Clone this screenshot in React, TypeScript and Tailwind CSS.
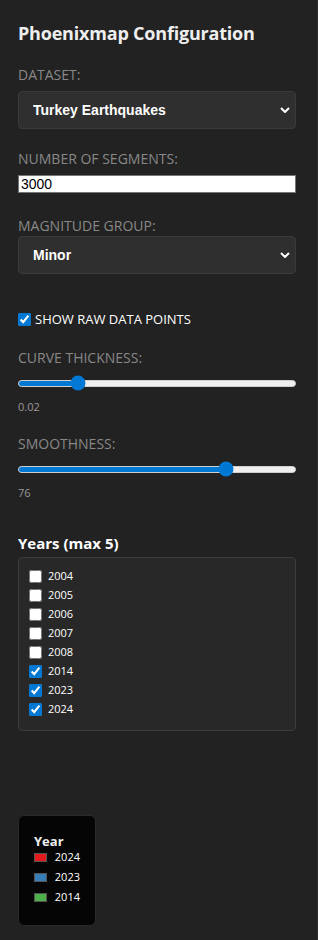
import { useState } from 'react'

const years = [
  { year: 2004, checked: false },
  { year: 2005, checked: false },
  { year: 2006, checked: false },
  { year: 2007, checked: false },
  { year: 2008, checked: false },
  { year: 2014, checked: true },
  { year: 2023, checked: true },
  { year: 2024, checked: true },
]

const legend = [
  { year: 2024, color: 'bg-[#e41a1c]' },
  { year: 2023, color: 'bg-[#377eb8]' },
  { year: 2014, color: 'bg-[#4daf4a]' },
]

function Chevron() {
  return (
    <svg
      viewBox="0 0 10 6"
      className="pointer-events-none absolute top-1/2 right-[6px] h-[6px] w-[10px] -translate-y-1/2"
    >
      <polyline points="1,1 5,5 9,1" fill="none" stroke="#fff" strokeWidth="2" />
    </svg>
  )
}

function Select({ value, options }: { value: string; options: string[] }) {
  return (
    <div className="relative">
      <select
        defaultValue={value}
        className="h-[38px] w-full appearance-none rounded-[4px] border border-[#3a3a3a] bg-[#2f2f2f] pl-[14px] text-[14px] font-bold text-white outline-none [font-family:'Liberation_Sans',Arial,sans-serif]"
      >
        {options.map((o) => (
          <option key={o}>{o}</option>
        ))}
      </select>
      <Chevron />
    </div>
  )
}

function Slider({ percent }: { percent: number }) {
  return (
    <div className="relative flex h-[16px] items-center">
      <div className="h-[7px] w-full overflow-hidden rounded-full border border-[#cfcfcf] bg-[#efefef]">
        <div className="h-full bg-[#0078d4]" style={{ width: `${percent}%` }} />
      </div>
      <div
        className="absolute top-1/2 h-[15px] w-[15px] -translate-x-1/2 -translate-y-1/2 rounded-full bg-[#0078d4]"
        style={{ left: `calc(7px + (100% - 14px) * ${percent / 100})` }}
      />
    </div>
  )
}

function Label({ children, className }: { children: string; className: string }) {
  return (
    <div className={`text-[14px] leading-[20px] text-[#888] uppercase ${className}`}>
      {children}
    </div>
  )
}

export default function App() {
  const [showRaw, setShowRaw] = useState(true)

  return (
    <div className="min-h-[940px] w-[318px] border-r border-[#2c2c2c] bg-[#222222] pt-[20px] pr-[21px] pl-[18px] text-white [font-family:'Open_Sans','Noto_Sans',sans-serif]">
      <h3 className="text-[18px] leading-[26px] font-bold tracking-[-0.2px] text-[#eee]">
        Phoenixmap Configuration
      </h3>

      <Label className="mt-[19px]">Dataset:</Label>
      <div className="mt-[6px]">
        <Select value="Turkey Earthquakes" options={['Turkey Earthquakes']} />
      </div>

      <Label className="mt-[20px]">Number of segments:</Label>
      <input
        type="text"
        defaultValue="3000"
        className="mt-[6px] block h-[18px] w-full border border-[#767676] bg-white px-[2px] text-[14px] leading-[16px] text-black outline-none [font-family:'Liberation_Sans',Arial,sans-serif]"
      />

      <Label className="mt-[23px]">Magnitude group:</Label>
      <div className="mt-[0px]">
        <Select value="Minor" options={['Minor']} />
      </div>

      <label className="mt-[36px] flex items-center gap-[4px] text-[13px] leading-[18px] text-white">
        <input
          type="checkbox"
          checked={showRaw}
          onChange={(e) => setShowRaw(e.target.checked)}
          className="m-0 h-[13px] w-[13px] accent-[#0078d4]"
        />
        SHOW RAW DATA POINTS
      </label>

      <Label className="mt-[20px]">Curve thickness:</Label>
      <div className="mt-[7px]">
        <Slider percent={20} />
      </div>
      <div className="mt-[8px] text-[11px] leading-[16px] text-[#999]">0.02</div>

      <Label className="mt-[19px]">Smoothness:</Label>
      <div className="mt-[7px]">
        <Slider percent={76} />
      </div>
      <div className="mt-[8px] text-[11px] leading-[16px] text-[#999]">76</div>

      <h4 className="mt-[31px] text-[15px] leading-[22px] font-bold text-white">Years (max 5)</h4>
      <div className="mt-[3px] rounded-[4px] border border-[#3c3c3c] bg-[#282828] px-[10px] pt-[9px] pb-[11px]">
        {years.map((y) => (
          <label key={y.year} className="flex h-[19px] items-center gap-[6px] text-[11px] text-white">
            <input
              type="checkbox"
              defaultChecked={y.checked}
              className="m-0 h-[13px] w-[13px] accent-[#0078d4]"
            />
            {y.year}
          </label>
        ))}
      </div>

      <div className="mt-[84px] w-[78px] rounded-[6px] border border-[#2a2a2a] bg-[#050505] px-[15px] pt-[16px] pb-[23px]">
        <div className="text-[13px] leading-[18px] font-bold text-[#eee]">Year</div>
        <div className="mt-[3px] flex flex-col gap-[11px]">
          {legend.map((l) => (
            <div key={l.year} className="flex h-[9px] items-center gap-[8px] text-[11px] text-white">
              <span className={`h-[9px] w-[15px] border border-[#555] ${l.color}`} />
              {l.year}
            </div>
          ))}
        </div>
      </div>
    </div>
  )
}
